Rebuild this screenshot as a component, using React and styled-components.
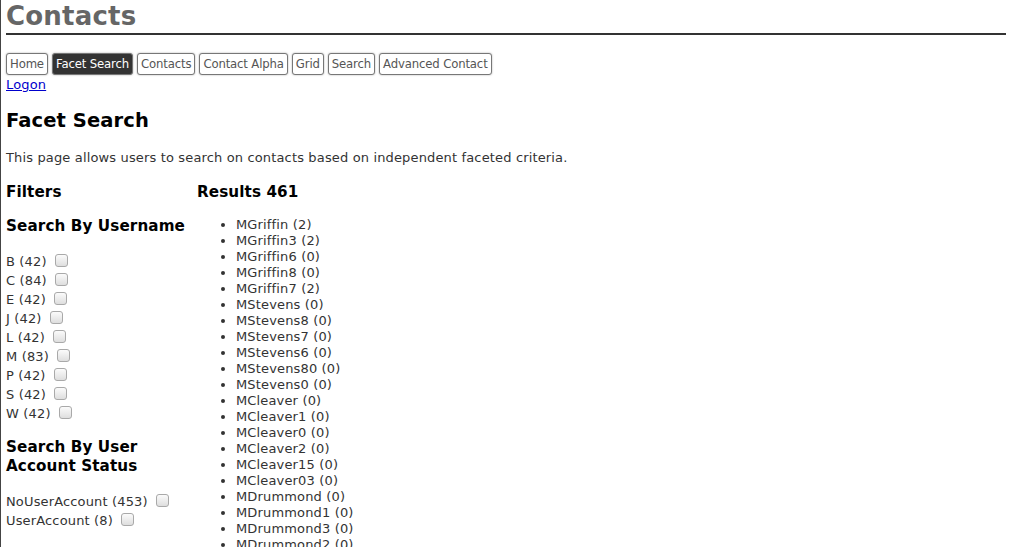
import React from 'react';
import styled, { createGlobalStyle } from 'styled-components';

const GlobalStyle = createGlobalStyle`
  body {
    margin: 0;
    background: #fff;
    font-family: "DejaVu Sans", Verdana, sans-serif;
    font-size: 13px;
    letter-spacing: 0.15px;
    color: #333;
  }
`;

const navItems = ['Home', 'Facet Search', 'Contacts', 'Contact Alpha', 'Grid', 'Search', 'Advanced Contact'];

const usernameFacets = [
  ['B', 42], ['C', 84], ['E', 42], ['J', 42], ['L', 42],
  ['M', 83], ['P', 42], ['S', 42], ['W', 42],
];

const statusFacets = [['NoUserAccount', 453], ['UserAccount', 8]];

const results = [
  ['MGriffin', 2], ['MGriffin3', 2], ['MGriffin6', 0], ['MGriffin8', 0], ['MGriffin7', 2],
  ['MStevens', 0], ['MStevens8', 0], ['MStevens7', 0], ['MStevens6', 0], ['MStevens80', 0],
  ['MStevens0', 0], ['MCleaver', 0], ['MCleaver1', 0], ['MCleaver0', 0], ['MCleaver2', 0],
  ['MCleaver15', 0], ['MCleaver03', 0], ['MDrummond', 0], ['MDrummond1', 0], ['MDrummond3', 0],
  ['MDrummond2', 0], ['MDrummond5', 0],
];

function App() {
  return (
    <Page>
      <GlobalStyle />
      <Title>Contacts</Title>
      <Nav>
        {navItems.map(item => (
          <NavButton key={item} $active={item === 'Facet Search'}>{item}</NavButton>
        ))}
      </Nav>
      <Logon href="#">Logon</Logon>
      <H2>Facet Search</H2>
      <Intro>This page allows users to search on contacts based on independent faceted criteria.</Intro>
      <Columns>
        <Filters>
          <H3>Filters</H3>
          <H3>Search By Username</H3>
          <FacetList>
            {usernameFacets.map(([name, count]) => (
              <Facet key={name}>
                {name} ({count}) <Check type="checkbox" />
              </Facet>
            ))}
          </FacetList>
          <H3>Search By User Account Status</H3>
          <FacetList>
            {statusFacets.map(([name, count]) => (
              <Facet key={name}>
                {name} ({count}) <Check type="checkbox" />
              </Facet>
            ))}
          </FacetList>
          <H3>Search By Role</H3>
        </Filters>
        <Results>
          <H3>Results 461</H3>
          <ResultList>
            {results.map(([name, count]) => (
              <li key={name}>{name} ({count})</li>
            ))}
          </ResultList>
        </Results>
      </Columns>
    </Page>
  );
}

export default App;

const Page = styled.div`
  min-height: 100vh;
  box-sizing: border-box;
  border-left: 1px solid #444;
  padding: 0 5px;
  overflow: hidden;
`;

const Title = styled.h1`
  margin: 0;
  padding: 2px 0 2px;
  font-size: 26px;
  line-height: 29px;
  font-weight: bold;
  letter-spacing: 0.2px;
  color: #666;
  border-bottom: 2px solid #333;
`;

const Nav = styled.nav`
  display: flex;
  gap: 4px;
  margin-top: 18px;
`;

const NavButton = styled.span`
  display: inline-block;
  height: 22px;
  box-sizing: border-box;
  padding: 0 3px;
  line-height: 20px;
  font-size: 11.7px;
  letter-spacing: -0.15px;
  border: 1px solid #777;
  border-radius: 3px;
  box-shadow: 0 0 2px rgba(0, 0, 0, 0.35);
  color: ${props => (props.$active ? '#fff' : '#555')};
  background: ${props => (props.$active ? '#333' : '#fff')};
`;

const Logon = styled.a`
  display: block;
  width: fit-content;
  margin-top: 2px;
  font-size: 13px;
  line-height: 16px;
  color: #00c;
`;

const H2 = styled.h2`
  margin: 16px 0 0;
  font-size: 19.5px;
  line-height: 24px;
  letter-spacing: 0.1px;
  color: #000;
`;

const Intro = styled.p`
  margin: 17px 0 0;
  font-size: 13px;
  line-height: 16px;
`;

const Columns = styled.div`
  display: flex;
  margin-top: 17px;
`;

const Filters = styled.div`
  width: 191px;
  flex-shrink: 0;
`;

const Results = styled.div`
  flex: 1;
`;

const H3 = styled.h3`
  margin: 0 0 15px;
  font-size: 15.2px;
  line-height: 19px;
  letter-spacing: 0.1px;
  color: #000;
`;

const FacetList = styled.div`
  margin: 16px 0 15px;
`;

const Facet = styled.div`
  line-height: 19px;
  height: 19px;
`;

const Check = styled.input`
  appearance: none;
  width: 13px;
  height: 13px;
  margin: 0 0 0 4px;
  vertical-align: -1px;
  border: 1px solid #a9a9a9;
  border-radius: 3px;
  background: linear-gradient(#fbfbfb, #dedede);
`;

const ResultList = styled.ul`
  margin: 11px 0 0;
  padding-left: 39px;
  line-height: 16px;
  color: #333;
`;
